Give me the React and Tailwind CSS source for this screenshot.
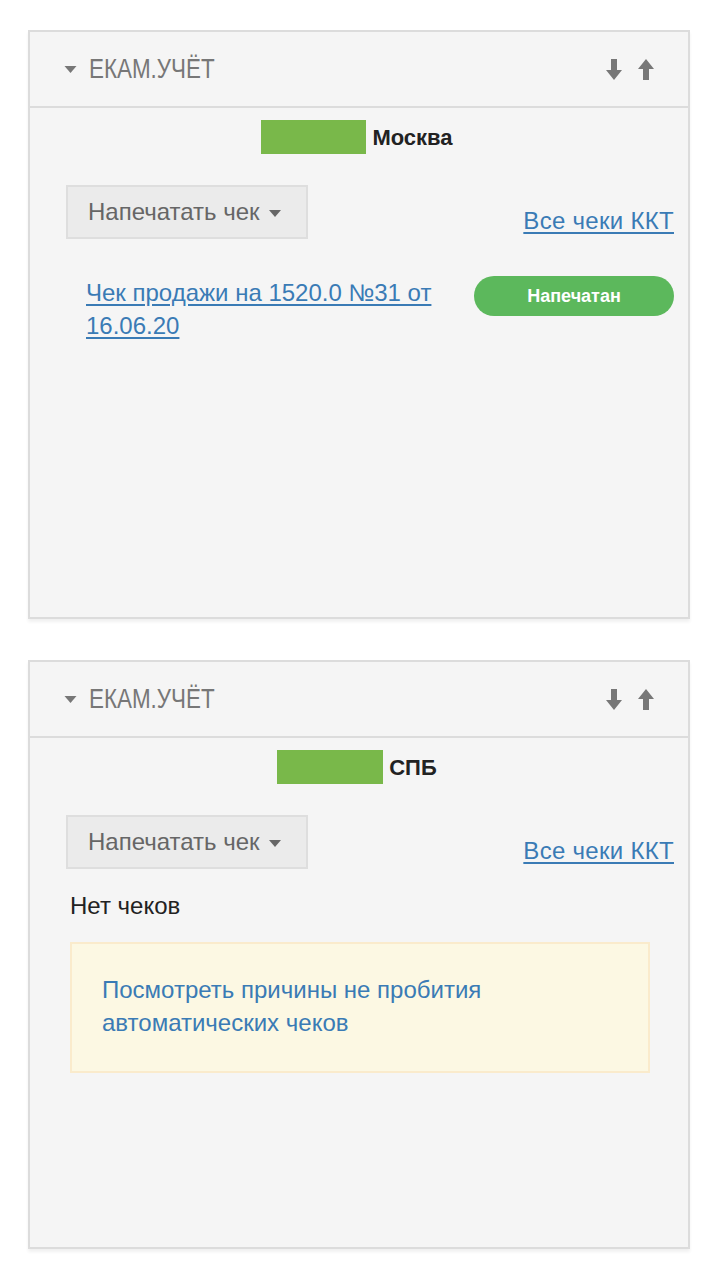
import React from "react";

function Caret({ className }) {
  return (
    <svg viewBox="0 0 12 7" className={className} fill="currentColor">
      <path d="M0 0h12L6 7z" />
    </svg>
  );
}

function ArrowDown() {
  return (
    <svg viewBox="0 0 16 21" className="w-[16px] h-[21px]" fill="#777">
      <path d="M5 0h6v11h5L8 21 0 11h5z" />
    </svg>
  );
}

function ArrowUp() {
  return (
    <svg viewBox="0 0 16 21" className="w-[16px] h-[21px]" fill="#777">
      <path d="M8 0l8 10h-5v11H5V10H0z" />
    </svg>
  );
}

function Panel({ city, cityWidth, children }) {
  return (
    <div className="ml-[28px] w-[662px] h-[589px] border-2 border-[#dcdcdc] bg-[#f5f5f5] shadow-[0_3px_3px_rgba(0,0,0,0.06)] flex flex-col">
      <div className="h-[76px] border-b-2 border-[#dcdcdc] flex items-center justify-between pl-[34px] pr-[34px]">
        <div className="flex items-center gap-[12px] text-[#777]">
          <Caret className="w-[13px] h-[7px]" />
          <span className="inline-block text-[27px] leading-none scale-x-[0.83] origin-left">
            ЕКАМ.УЧЁТ
          </span>
        </div>
        <div className="flex items-center gap-[16px]">
          <ArrowDown />
          <ArrowUp />
        </div>
      </div>
      <div className="flex-1 pt-[12px] px-[36px]">
        <div className="flex justify-center items-center gap-[6px] pr-[4px]">
          <div className={`h-[34px] bg-[#79b84a] ${cityWidth}`} />
          <span className="text-[22px] text-[#222] font-semibold">{city}</span>
        </div>
        <div className="flex justify-between items-end mt-[31px]">
          <button className="h-[54px] w-[242px] bg-[#ebebeb] border-2 border-[#dedede] flex items-center pl-[20px] gap-[8px] text-[#666] text-[24px]">
            Напечатать чек
            <Caret className="w-[14px] h-[7px] mt-[2px]" />
          </button>
          <a href="#" className="text-[24px] text-[#3a7bb5] underline underline-offset-[3px] tracking-[0.3px] mr-[-22px]">
            Все чеки ККТ
          </a>
        </div>
        {children}
      </div>
    </div>
  );
}

export default function App() {
  return (
    <div className="bg-white w-[708px] h-[1276px] pt-[30px] font-['Liberation_Sans',Arial,sans-serif]">
      <Panel city="Москва" cityWidth="w-[105px]">
        <div className="flex justify-between items-start mt-[37px] mr-[-22px]">
          <a href="#" className="ml-[20px] w-[370px] text-[24px] leading-[33px] text-[#3a7bb5] underline underline-offset-[3px]">
            Чек продажи на 1520.0 №31 от 16.06.20
          </a>
          <span className="w-[200px] h-[40px] rounded-full bg-[#5cb85c] text-white font-bold text-[18px] flex items-center justify-center">
            Напечатан
          </span>
        </div>
      </Panel>
      <div className="h-[41px]" />
      <Panel city="СПБ" cityWidth="w-[106px]">
        <p className="mt-[19px] ml-[4px] text-[24px] text-[#222]">Нет чеков</p>
        <div className="mt-[18px] ml-[4px] w-[580px] h-[131px] bg-[#fcf8e3] border-2 border-[#faebcc] pt-[29px] px-[30px]">
          <a href="#" className="block text-[24px] leading-[33px] text-[#3a7bb5] w-[420px]">
            Посмотреть причины не пробития автоматических чеков
          </a>
        </div>
      </Panel>
    </div>
  );
}
